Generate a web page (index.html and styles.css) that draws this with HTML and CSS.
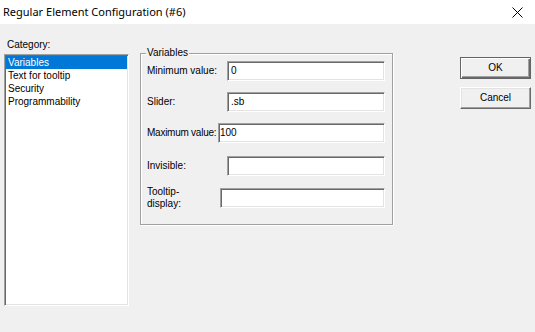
FILE: index.html
```html
<!DOCTYPE html>
<html>
<head>
<meta charset="utf-8">
<link rel="stylesheet" href="styles.css">
</head>
<body>
<div class="titlebar">
  <span class="title">Regular Element Configuration (#6)</span>
  <svg class="close" width="11" height="11" viewBox="0 0 11 11"><path d="M0.5 0.5 L10.5 10.5 M10.5 0.5 L0.5 10.5" stroke="#000" stroke-width="1" fill="none"/></svg>
</div>
<div class="content">
  <div class="left">
    <div class="cat-label">Category:</div>
    <div class="listbox">
      <div class="item selected">Variables</div>
      <div class="item">Text for tooltip</div>
      <div class="item">Security</div>
      <div class="item">Programmability</div>
    </div>
  </div>
  <div class="group">
    <span class="legend">Variables</span>
    <div class="row r-min"><span class="lbl">Minimum value:</span><div class="edit">0</div></div>
    <div class="row r-slider"><span class="lbl">Slider:</span><div class="edit">.sb</div></div>
    <div class="row r-max"><span class="lbl">Maximum value:</span><div class="edit">100</div></div>
    <div class="row r-inv"><span class="lbl">Invisible:</span><div class="edit"></div></div>
    <div class="row r-tip"><span class="lbl">Tooltip-<br>display:</span><div class="edit"></div></div>
  </div>
  <div class="buttons">
    <div class="btn default">OK</div>
    <div class="btn">Cancel</div>
  </div>
</div>
</body>
</html>
```
FILE: styles.css
```css
html, body {
  margin: 0;
  padding: 0;
}
body {
  width: 535px;
  height: 332px;
  background: #f0f0f0;
  font-family: "Liberation Sans", Arial, sans-serif;
  font-size: 10px;
  color: #000;
  overflow: hidden;
}
.titlebar {
  height: 24px;
  background: #fff;
  display: flex;
  align-items: center;
  justify-content: space-between;
  padding-left: 3px;
}
.title {
  font-family: "Noto Sans", sans-serif;
  font-size: 11px;
  line-height: 24px;
}
.close {
  display: block;
  margin-right: 12px;
}
.content {
  display: flex;
  align-items: flex-start;
}
.left {
  margin-left: 4px;
  width: 125px;
}
.cat-label {
  margin-top: 15px;
  padding-left: 3px;
  line-height: 12px;
  height: 12px;
}
.listbox {
  margin-top: 3px;
  height: 248px;
  background: #fff;
  border: 1px solid;
  border-color: #a0a0a0 #fff #fff #a0a0a0;
  box-shadow: inset 1px 1px 0 #696969, inset -1px -1px 0 #e3e3e3;
  padding: 1px;
}
.item {
  line-height: 13px;
  height: 13px;
  padding-left: 2px;
  white-space: nowrap;
}
.item.selected {
  background: #0078d7;
  color: #fff;
}
.group {
  position: relative;
  margin-left: 11px;
  margin-top: 29px;
  width: 253px;
  height: 172px;
  box-sizing: border-box;
  border: 1px solid #a0a0a0;
  box-shadow: inset 1px 1px 0 #fff, 1px 1px 0 #fff;
  padding: 7px 7px 0 6px;
  display: flex;
  flex-direction: column;
  gap: 11px;
}
.legend {
  position: absolute;
  top: -7px;
  left: 5px;
  padding: 0 1px;
  background: #f0f0f0;
  line-height: 12px;
}
.row {
  display: flex;
  align-items: center;
  height: 20px;
}
.lbl {
  flex: none;
  width: 80px;
  line-height: 12px;
  white-space: nowrap;
}
.r-max .lbl { width: 71px; letter-spacing: -0.25px; }
.r-tip .lbl { width: 73px; }
.r-inv { margin-top: 2px; }
.r-tip { margin-top: 1px; }
.edit {
  flex: 1;
  height: 20px;
  box-sizing: border-box;
  background: #fff;
  border: 1px solid;
  border-color: #a0a0a0 #fff #fff #a0a0a0;
  box-shadow: inset 1px 1px 0 #696969, inset -1px -1px 0 #e3e3e3;
  padding: 0 3px;
  line-height: 18px;
}
.r-max .edit { padding-left: 1px; }
.buttons {
  margin-left: 67px;
  margin-top: 33px;
  display: flex;
  flex-direction: column;
  gap: 8px;
}
.btn {
  width: 71px;
  height: 22px;
  box-sizing: border-box;
  text-align: center;
  line-height: 20px;
  border: 1px solid;
  border-color: #fff #696969 #696969 #fff;
  box-shadow: inset -1px -1px 0 #a0a0a0, inset 1px 1px 0 #e3e3e3;
}
.btn.default {
  border: 1px solid #646464;
  box-shadow: inset 1px 1px 0 #fff, inset -1px -1px 0 #696969, inset -2px -2px 0 #a0a0a0;
}
```
